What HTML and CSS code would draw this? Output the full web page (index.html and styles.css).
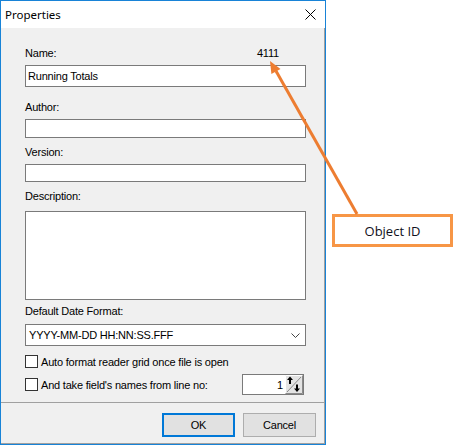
FILE: index.html
```html
<!DOCTYPE html>
<html>
<head>
<meta charset="utf-8">
<link rel="stylesheet" href="styles.css">
</head>
<body>
<div class="stage">
  <div class="window">
    <div class="titlebar">
      <span class="title">Properties</span>
      <svg class="close" width="11" height="11" viewBox="0 0 11 11"><path d="M0.5 0.5L10.5 10.5M10.5 0.5L0.5 10.5" stroke="#000" stroke-width="1" fill="none"/></svg>
    </div>
    <div class="body">
      <div class="content">
        <div class="name-row"><span>Name:</span><span class="objid">4111</span></div>
        <div class="field field-name">Running Totals</div>
        <div class="label label-author">Author:</div>
        <div class="field field-author"></div>
        <div class="label label-version">Version:</div>
        <div class="field field-version"></div>
        <div class="label label-desc">Description:</div>
        <div class="field field-desc"></div>
        <div class="label label-date">Default Date Format:</div>
        <div class="field field-select">
          <span>YYYY-MM-DD HH:NN:SS.FFF</span>
          <svg class="chevron" width="9" height="5" viewBox="0 0 9 5"><path d="M0.5 0.5L4.5 4.5L8.5 0.5" stroke="#444" stroke-width="1" fill="none"/></svg>
        </div>
        <div class="check-row check-row-1"><span class="checkbox"></span><span>Auto format reader grid once file is open</span></div>
        <div class="check-row check-row-2">
          <span class="checkbox"></span><span>And take field's names from line no:</span>
          <div class="spinner">
            <span class="spin-value">1</span>
            <svg class="spin-btn" width="18" height="19" viewBox="0 0 18 19">
              <rect x="0" y="0" width="18" height="19" fill="#e3e3e3"/>
              <path d="M0.5 18.5V0.5H17.5" stroke="#fff" fill="none"/>
              <path d="M0.5 18.5H17.5V0.5" stroke="#8a8a8a" fill="none"/>
              <path d="M2 17L16 2" stroke="#8a8a8a" stroke-width="1" fill="none"/>
              <path d="M2 5L5 1.5L8 5Z" fill="#000"/>
              <rect x="4" y="4.5" width="2" height="4.5" fill="#000"/>
              <path d="M9 13.5L12 17L15 13.5Z" fill="#000"/>
              <rect x="11" y="9.5" width="2" height="4.5" fill="#000"/>
            </svg>
          </div>
        </div>
      </div>
      <div class="separator"></div>
      <div class="buttons">
        <button class="btn btn-default">OK</button>
        <button class="btn">Cancel</button>
      </div>
    </div>
  </div>
  <div class="callout">Object ID</div>
  <svg class="arrow" width="455" height="445" viewBox="0 0 455 445">
    <path d="M357 214L276 71" stroke="#ed7d31" stroke-width="3" fill="none"/>
    <path d="M270 61L280.5 68.9L271.4 74Z" fill="#ed7d31"/>
  </svg>
</div>
</body>
</html>
```
FILE: styles.css
```css
html, body {
  margin: 0;
  padding: 0;
  background: #ffffff;
}
.stage {
  position: relative;
  width: 455px;
  height: 445px;
  overflow: hidden;
  font-family: "Liberation Sans", Arial, sans-serif;
  font-size: 11px;
  letter-spacing: -0.2px;
  color: #000;
}
.window {
  width: 326px;
  height: 445px;
  box-sizing: border-box;
  border: 1px solid #1883d7;
  display: flex;
  flex-direction: column;
}
.titlebar {
  height: 27px;
  flex: none;
  background: #fff;
  display: flex;
  align-items: center;
  padding-left: 4px;
}
.title {
  font-family: "Noto Sans", "Open Sans", sans-serif;
  font-size: 11.5px;
  letter-spacing: 0;
  color: #000;
}
.close {
  margin-left: auto;
  margin-right: 9px;
  margin-top: 0px;
}
.body {
  flex: 1;
  background: #f0f0f0;
  border-right: 1px solid #a0a0a0;
  border-bottom: 1px solid #a0a0a0;
  display: flex;
  flex-direction: column;
}
.content {
  padding: 19px 18px 0 24px;
  display: flex;
  flex-direction: column;
}
.name-row {
  display: flex;
  justify-content: space-between;
  height: 13px;
  line-height: 13px;
}
.objid {
  margin-right: 27px;
}
.label {
  height: 13px;
  line-height: 13px;
}
.field {
  box-sizing: border-box;
  border: 1px solid #7a7a7a;
  background: #fff;
  padding-left: 2px;
  display: flex;
  align-items: center;
}
.field-name { margin-top: 5px; height: 22px; }
.label-author { margin-top: 14px; }
.field-author { margin-top: 5px; height: 19px; }
.label-version { margin-top: 8px; }
.field-version { margin-top: 5px; height: 18px; }
.label-desc { margin-top: 8px; }
.field-desc { margin-top: 8px; height: 89px; }
.label-date { margin-top: 5px; }
.field-select {
  margin-top: 6px;
  height: 22px;
  padding-left: 3px;
  justify-content: space-between;
}
.chevron {
  margin-right: 5px;
  margin-top: 1px;
}
.check-row {
  display: flex;
  align-items: center;
}
.check-row-1 { margin-top: 9px; height: 13px; }
.check-row-2 { margin-top: 6px; height: 21px; }
.checkbox {
  width: 13px;
  height: 13px;
  box-sizing: border-box;
  border: 1px solid #333;
  background: #fff;
  margin-right: 3px;
  flex: none;
}
.spinner {
  margin-left: auto;
  margin-right: 2px;
  width: 62px;
  height: 21px;
  box-sizing: border-box;
  border: 1px solid #7a7a7a;
  background: #fff;
  display: flex;
  align-items: center;
  justify-content: flex-end;
}
.spin-value {
  margin-right: 2px;
}
.spin-btn {
  display: block;
}
.separator {
  margin-top: 7px;
  height: 1px;
  background: #a0a0a0;
}
.buttons {
  margin-top: 10px;
  display: flex;
  justify-content: flex-end;
  gap: 8px;
  padding-right: 8px;
}
.btn {
  width: 73px;
  height: 24px;
  box-sizing: border-box;
  background: #e1e1e1;
  border: 1px solid #adadad;
  font-family: "Liberation Sans", Arial, sans-serif;
  font-size: 11px;
  letter-spacing: -0.2px;
  color: #000;
  padding: 0;
  margin: 0;
}
.btn-default {
  border: 2px solid #0078d7;
}
.callout {
  position: absolute;
  left: 332px;
  top: 214px;
  width: 121px;
  height: 33px;
  box-sizing: border-box;
  border: 3px solid #f79646;
  background: #fff;
  display: flex;
  align-items: center;
  justify-content: center;
  font-family: "Open Sans", "Noto Sans", sans-serif;
  font-size: 13px;
  letter-spacing: 0;
  color: #101020;
}
.arrow {
  position: absolute;
  left: 0;
  top: 0;
  pointer-events: none;
}
```
